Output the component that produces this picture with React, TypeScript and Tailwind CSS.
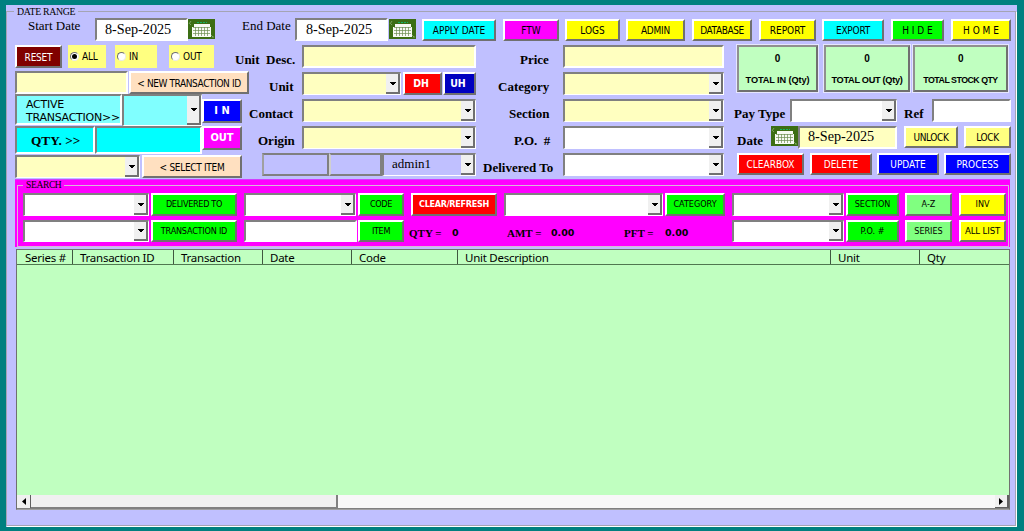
import type { ReactNode } from "react";
import clsx from "clsx";
import { twMerge } from "tailwind-merge";

const RAISED =
  "border-2 border-t-white border-l-white border-r-[#707070] border-b-[#707070]";
const SUNKEN =
  "border-2 border-t-[#808080] border-l-[#808080] border-r-white border-b-white";
const UI = "font-['DejaVu_Sans_Condensed','Noto_Sans',sans-serif]";
const SERIF = "font-['Liberation_Serif',serif]";

type BoxProps = { className?: string; children?: ReactNode };

function Button({ className, children }: BoxProps) {
  return (
    <button
      type="button"
      className={clsx(
        "flex shrink-0 items-center justify-center pt-px whitespace-pre",
        UI,
        RAISED,
        twMerge("text-[10px]", className),
      )}
    >
      {children}
    </button>
  );
}

function Field({ className, children }: BoxProps) {
  return (
    <div className={clsx("flex shrink-0 items-center whitespace-pre", SUNKEN, className)}>
      {children}
    </div>
  );
}

function Combo({ className, children }: BoxProps) {
  return (
    <div
      className={clsx(
        "flex shrink-0 justify-between border-2 border-r border-b border-t-[#808080] border-l-[#808080] border-r-white border-b-white",
        className,
      )}
    >
      <span className={clsx("pl-2 text-[13px] leading-[17px]", SERIF)}>{children}</span>
      <span className="flex w-[14px] shrink-0 items-center justify-center border-r-2 border-b-2 border-r-[#707070] border-b-[#707070] bg-[#f0f0f0]">
        <svg className="mt-px ml-px" width="7" height="4" viewBox="0 0 7 4" shapeRendering="crispEdges">
          <path d="M0 0h7L3.5 3.5z" fill="#000" />
        </svg>
      </span>
    </div>
  );
}

function Label({ className, children }: BoxProps) {
  return (
    <span
      className={clsx(
        "shrink-0 whitespace-pre pt-[7px] text-[13px] leading-4 font-bold",
        SERIF,
        className,
      )}
    >
      {children}
    </span>
  );
}

function DateIcon({ className }: { className?: string }) {
  return (
    <svg
      className={clsx("shrink-0", className)}
      width="27"
      height="20"
      viewBox="0 0 27 20"
    >
      <rect width="27" height="20" fill="#3c6e14" />
      <path d="M9 3.5h10" stroke="#14b464" strokeDasharray="2 1" />
      <path d="M6 5h16v3h1v10H4V8h2z" fill="#f8faf4" />
      <path
        d="M5 8.5h17M5 11.5h17M5 14.5h17M7.5 8v9M10.5 8v9M13.5 8v9M16.5 8v9M19.5 8v9"
        stroke="#6c8c50"
        strokeWidth="0.7"
      />
      <path d="M1 5l2-3M2 6l1-1M23 16l2 2M24 18h2" stroke="#8ab070" strokeWidth="0.8" />
    </svg>
  );
}

function Radio({ className, checked, children }: BoxProps & { checked?: boolean }) {
  return (
    <label
      className={clsx(
        "flex h-[23px] shrink-0 items-center gap-[3px] bg-[#ffff80] pl-0.5 text-[10px] leading-none tracking-[-0.2px]",
        UI,
        className,
      )}
    >
      <span className="flex size-[9px] items-center justify-center rounded-full border border-t-[#707070] border-r-[#e8e8e8] border-b-[#e8e8e8] border-l-[#707070] bg-white">
        {checked && <span className="size-[5px] rounded-full bg-black" />}
      </span>
      {children}
    </label>
  );
}

function Total({ className, title }: { className?: string; title: string }) {
  return (
    <div
      className={clsx(
        "flex h-[47px] shrink-0 flex-col items-center border-2 border-t-[#909090] border-r-[#707070] border-b-[#707070] border-l-[#909090] bg-[#c0ffc0] pt-[7px] font-['Liberation_Sans',sans-serif] font-bold whitespace-nowrap outline-1 outline-white/60",
        className,
      )}
    >
      <span className="text-[10px] leading-[10px]">0</span>
      <span className="mt-[10px] leading-[12px]">{title}</span>
    </div>
  );
}

const COLUMNS = [
  { name: "Series #", width: "w-[55px]" },
  { name: "Transaction ID", width: "w-[101px]" },
  { name: "Transaction", width: "w-[89px]" },
  { name: "Date", width: "w-[89px]" },
  { name: "Code", width: "w-[106px]" },
  { name: "Unit Description", width: "w-[373px]" },
  { name: "Unit", width: "w-[89px]" },
  { name: "Qty", width: "flex-1" },
];

function Toolbar() {
  return (
    <div className="flex h-[26px] pl-[21px]">
      <span className={clsx("-mt-px w-[67px] text-[13px] leading-4", SERIF)}>Start Date</span>
      <Field className={clsx("h-[23px] w-[93px] -mt-px bg-white pl-2 text-[14.2px]", SERIF)}>
        8-Sep-2025
      </Field>
      <DateIcon />
      <span className={clsx("-mt-px ml-[27px] w-[53px] text-[13px] leading-4", SERIF)}>
        End Date
      </span>
      <Field className={clsx("h-[23px] w-[93px] -mt-px bg-white pl-[9px] text-[14.2px]", SERIF)}>
        8-Sep-2025
      </Field>
      <DateIcon className="ml-px" />
      <Button className="ml-[6px] h-[22px] w-[74px] bg-[#00ffff]">APPLY DATE</Button>
      <Button className="ml-[7px] h-[22px] w-[56px] bg-[#ff00ff]">FTW</Button>
      <Button className="ml-[6px] h-[22px] w-[55px] bg-[#ffff00]">LOGS</Button>
      <Button className="ml-[6px] h-[22px] w-[59px] bg-[#ffff00] tracking-[-0.2px]">ADMIN</Button>
      <Button className="ml-[7px] h-[22px] w-[60px] bg-[#ffff00] tracking-[-0.4px]">DATABASE</Button>
      <Button className="ml-[7px] h-[22px] w-[57px] bg-[#ffff00]">REPORT</Button>
      <Button className="ml-[6px] h-[22px] w-[62px] bg-[#00ffff] tracking-[-0.2px]">EXPORT</Button>
      <Button className="ml-[7px] h-[22px] w-[53px] bg-[#00ff00]">H I D E</Button>
      <Button className="ml-[7px] h-[22px] w-[60px] bg-[#ffff00]">H O M E</Button>
    </div>
  );
}

function TransactionPanel() {
  return (
    <div className="w-[234px] shrink-0">
      <div className="flex h-[26px]">
        <Button className="h-[23px] w-[47px] bg-[#800000] tracking-[-0.2px] text-white">RESET</Button>
        <Radio checked className="ml-[6px] w-[38px]">ALL</Radio>
        <Radio className="ml-[9px] w-[42px]">IN</Radio>
        <Radio className="ml-[12px] w-[45px]">OUT</Radio>
      </div>
      <div className="flex h-[23px]">
        <Field className="h-[23px] w-[113px] bg-[#ffffc0]" />
        <Button className="ml-px h-[23px] w-[120px] bg-[#ffe0c0] tracking-[-0.4px]">
          {"< NEW TRANSACTION ID"}
        </Button>
      </div>
      <div className="flex h-[61px]">
        <div className="w-[187px]">
          <div className="flex h-[32px]">
            <Field className="h-[31px] w-[107px] bg-[#80ffff] pt-[2px] pl-[9px] font-['DejaVu_Sans',sans-serif] text-[11px] leading-[13px] tracking-[-0.25px]">
              {"ACTIVE\nTRANSACTION>>"}
            </Field>
            <Combo className="h-[32px] w-[80px] bg-[#80ffff]" />
          </div>
          <div className="flex">
            <Field
              className={clsx("h-[28px] w-[80px] bg-[#00ffff] pt-[2px] pl-[14px] text-[13.3px] font-bold", SERIF)}
            >
              {"QTY. >>"}
            </Field>
            <Field className="h-[28px] w-[107px] bg-[#00ffff]" />
          </div>
        </div>
        <div className="flex flex-col gap-[3px] pt-[5px]">
          <Button className="h-[24px] w-[40px] bg-[#0000ff] text-[11px] font-bold text-white">
            I N
          </Button>
          <Button className="h-[24px] w-[40px] bg-[#ff00ff] text-[11px] font-bold text-white">
            OUT
          </Button>
        </div>
      </div>
      <div className="flex">
        <Combo className="h-[23px] w-[125px] bg-[#ffffc0]" />
        <Button className="ml-[2px] h-[23px] w-[100px] bg-[#ffe0c0] tracking-[-0.3px]">
          {"< SELECT ITEM"}
        </Button>
      </div>
    </div>
  );
}

function UnitPanel() {
  return (
    <div className="-ml-[14px] flex w-[241px] shrink-0 flex-col gap-[4px]">
      <div className="flex h-[23px]">
        <Label className="w-[67px]">Unit  Desc.</Label>
        <Field className="h-[23px] w-[174px] bg-[#ffffc0]" />
      </div>
      <div className="flex h-[23px]">
        <Label className="w-[67px] pl-[34px]">Unit</Label>
        <Combo className="h-[23px] w-[99px] bg-[#ffffc0]" />
        <Button className="ml-[2px] h-[23px] w-[39px] bg-[#ff0000] pr-[3px] text-[10.5px] font-bold text-white">
          DH
        </Button>
        <Button className="ml-px h-[23px] w-[33px] bg-[#0000c0] pr-[3px] text-[10.5px] font-bold text-white">
          UH
        </Button>
      </div>
      <div className="flex h-[23px]">
        <Label className="w-[67px] pl-[14px]">Contact</Label>
        <Combo className="h-[23px] w-[174px] bg-[#ffffc0]" />
      </div>
      <div className="flex h-[23px]">
        <Label className="w-[67px] pl-[23px]">Origin</Label>
        <Combo className="h-[23px] w-[174px] bg-[#ffffc0]" />
      </div>
      <div className="flex h-[23px] pl-[27px]">
        <div className="h-[23px] w-[67px] border-2 border-[#808080] border-l-[#a0a0a0]" />
        <div className="h-[23px] w-[53px] border-2 border-[#808080] border-l-[#d0d0d0]" />
        <Combo className="h-[23px] w-[94px]">admin1</Combo>
      </div>
    </div>
  );
}

function CategoryPanel() {
  return (
    <div className="ml-[7px] flex w-[241px] shrink-0 flex-col gap-[4px]">
      <div className="flex h-[23px]">
        <Label className="w-[80px] pl-[37px]">Price</Label>
        <Field className="h-[23px] w-[161px] bg-[#ffffc0]" />
      </div>
      <div className="flex h-[23px]">
        <Label className="w-[80px] pl-[15px]">Category</Label>
        <Combo className="h-[23px] w-[161px] bg-[#ffffc0]" />
      </div>
      <div className="flex h-[23px]">
        <Label className="w-[80px] pl-[26px]">Section</Label>
        <Combo className="h-[23px] w-[161px] bg-[#ffffc0]" />
      </div>
      <div className="flex h-[23px]">
        <Label className="w-[80px] pl-[31px]">P.O.  #</Label>
        <Combo className="h-[23px] w-[161px] bg-white" />
      </div>
      <div className="flex h-[23px]">
        <Label className="w-[80px]">Delivered To</Label>
        <Combo className="h-[23px] w-[161px] bg-white" />
      </div>
    </div>
  );
}

function SummaryPanel() {
  return (
    <div className="ml-[10px] flex w-[277px] shrink-0 flex-col">
      <div className="flex h-[54px] pl-[3px]">
        <Total className="w-[81px] text-[9.2px] tracking-[-0.1px]" title="TOTAL IN (Qty)" />
        <Total className="ml-[6px] w-[86px] text-[9.2px] tracking-[-0.3px]" title="TOTAL OUT (Qty)" />
        <Total className="ml-[3px] w-[95px] text-[8.8px] tracking-[-0.5px]" title="TOTAL STOCK QTY" />
      </div>
      <div className="flex h-[27px]">
        <Label className="w-[56px]">Pay Type</Label>
        <Combo className="h-[23px] w-[107px] bg-white" />
        <Label className="w-[35px] pl-[7px]">Ref</Label>
        <Field className="h-[23px] w-[79px] bg-white" />
      </div>
      <div className="flex h-[27px]">
        <Label className="w-[37px] pl-[3px]">Date</Label>
        <DateIcon />
        <Field className={clsx("h-[23px] w-[99px] bg-[#ffffc0] pl-2 pb-[2px] text-[14.2px]", SERIF)}>
          8-Sep-2025
        </Field>
        <Button className="ml-[7px] h-[22px] w-[54px] bg-[#ffff80] tracking-[-0.4px]">UNLOCK</Button>
        <Button className="ml-[6px] h-[22px] w-[47px] bg-[#ffff80] tracking-[-0.3px]">LOCK</Button>
      </div>
      <div className="flex pl-[3px]">
        <Button className="h-[22px] w-[67px] bg-[#ff0000] text-white">CLEARBOX</Button>
        <Button className="ml-[6px] h-[22px] w-[62px] bg-[#ff0000] text-white">DELETE</Button>
        <Button className="ml-[5px] h-[22px] w-[62px] bg-[#0000ff] text-white">UPDATE</Button>
        <Button className="ml-[5px] h-[22px] w-[67px] bg-[#0000ff] text-white">PROCESS</Button>
      </div>
    </div>
  );
}

type AmountProps = { label: string; value: string; className?: string; labelWidth: string };

function Amount({ label, value, className, labelWidth }: AmountProps) {
  return (
    <span className={clsx("flex shrink-0 items-center pt-[4px] text-[11px] font-bold", className)}>
      <span className={clsx(labelWidth, SERIF)}>{label}</span>
      <span className="font-['DejaVu_Sans',sans-serif] text-[9.5px]">{value}</span>
    </span>
  );
}

function SearchPanel() {
  return (
    <section className="h-[68px] w-[995px] border-t border-[#d040ff] bg-[#ff00ff] pl-[2px]">
      <fieldset className="h-[67px] w-[992px] border border-[#d8b8d8]">
        <legend
          className={clsx(
            "ml-[5px] h-[11px] bg-[#ff00ff] px-[3px] text-[9.5px] leading-[11px] tracking-[-0.35px]",
            SERIF,
          )}
        >
          SEARCH
        </legend>
        <div className="flex pt-[2px] pl-[5px]">
          <Combo className="h-[23px] w-[126px] bg-white" />
          <Button className="ml-[2px] h-[23px] w-[86px] bg-[#00ff00] text-[9px] tracking-[-0.3px]">
            DELIVERED TO
          </Button>
          <Combo className="ml-[7px] h-[23px] w-[112px] bg-white" />
          <Button className="ml-[2px] h-[23px] w-[46px] bg-[#00ff00] text-[9px] tracking-[-0.4px]">
            CODE
          </Button>
          <Button className="ml-[7px] h-[23px] w-[86px] bg-[#ff0000] text-[9px] font-bold tracking-[-0.3px] text-white">
            CLEAR/REFRESH
          </Button>
          <Combo className="ml-[7px] h-[23px] w-[159px] bg-white" />
          <Button className="ml-[2px] h-[23px] w-[60px] bg-[#00ff00] text-[9px]">CATEGORY</Button>
          <Combo className="ml-[7px] h-[23px] w-[112px] bg-white" />
          <Button className="ml-[2px] h-[23px] w-[53px] bg-[#00ff00] text-[9px]">SECTION</Button>
          <Button className="ml-[6px] h-[23px] w-[47px] bg-[#80ff80] text-[9px]">A-Z</Button>
          <Button className="ml-[7px] h-[23px] w-[47px] bg-[#ffff00] text-[9px]">INV</Button>
        </div>
        <div className="flex pt-[4px] pl-[5px]">
          <Combo className="h-[22px] w-[126px] bg-white" />
          <Button className="ml-[2px] h-[22px] w-[86px] bg-[#00ff00] text-[9px] tracking-[-0.2px]">
            TRANSACTION ID
          </Button>
          <Field className="ml-[7px] h-[22px] w-[113px] bg-white" />
          <Button className="ml-px h-[22px] w-[46px] bg-[#00ff00] text-[9px] tracking-[-0.3px]">
            ITEM
          </Button>
          <Amount className="ml-[5px] w-[98px]" labelWidth="w-[43px]" label="QTY =" value="0" />
          <Amount className="w-[117px]" labelWidth="w-[44px]" label="AMT =" value="0.00" />
          <Amount className="w-[108px]" labelWidth="w-[41px]" label="PFT =" value="0.00" />
          <Combo className="h-[22px] w-[112px] bg-white" />
          <Button className="ml-[2px] h-[22px] w-[53px] bg-[#00ff00] text-[9px]">P.O. #</Button>
          <Button className="ml-[6px] h-[22px] w-[47px] bg-[#80ff80] text-[9px]">SERIES</Button>
          <Button className="ml-[7px] h-[22px] w-[47px] bg-[#ffff00] text-[9.5px] tracking-[-0.1px]">
            ALL LIST
          </Button>
        </div>
      </fieldset>
    </section>
  );
}

function TransactionTable() {
  return (
    <section className="mt-[2px] ml-px flex h-[261px] w-[994px] flex-col border border-t-[#707070] border-r-[#707070] border-b-[#a0a0a0] border-l-[#707070] bg-[#c0ffc0]">
      <div className="flex h-[15px] shrink-0 border-b border-[#507850] font-['Noto_Sans',sans-serif] text-[11.5px] leading-[15px] tracking-[-0.25px]">
        {COLUMNS.map((column, i) => (
          <span
            key={column.name}
            className={clsx(
              "shrink-0 whitespace-nowrap",
              column.width,
              i > 0 ? "border-l border-[#405840] pl-[7px]" : "pl-[8px]",
            )}
          >
            {column.name}
          </span>
        ))}
      </div>
      <div className="flex-1" />
      <div className="flex h-[14px] shrink-0 border-b border-[#808080] bg-[#f8f8f8]">
        <span className="flex w-[14px] items-center justify-center border-r border-[#606060] bg-[#f0f0f0]">
          <svg width="4" height="7" viewBox="0 0 4 7">
            <path d="M4 0v7L0 3.5z" />
          </svg>
        </span>
        <span className="w-[307px] border-r-2 border-b border-[#808080] bg-[#f0f0f0]" />
        <span className="ml-auto flex w-[14px] items-center justify-center border-r-2 border-b border-[#606060] bg-[#f0f0f0]">
          <svg width="4" height="7" viewBox="0 0 4 7">
            <path d="M0 0v7l4-3.5z" />
          </svg>
        </span>
      </div>
    </section>
  );
}

export default function App() {
  return (
    <main className="h-[531px] w-[1024px] overflow-hidden bg-[#008080] pt-[5px] pl-[6px] text-black">
      <div className="h-[522px] w-[1011px] bg-[#c0c0ff]">
        <fieldset className="h-[521px] w-[1010px] border border-[#a4a4b4] shadow-[1px_1px_0_#fff]">
          <legend
            className={clsx(
              "ml-[7px] h-[13px] bg-[#c0c0ff] px-[3px] text-[9.8px] leading-[13px] tracking-[-0.3px]",
              SERIF,
            )}
          >
            DATE RANGE
          </legend>
          <div className="-mt-px pt-[2px]">
            <Toolbar />
            <div className="flex h-[134px] pl-[8px]">
              <TransactionPanel />
              <UnitPanel />
              <CategoryPanel />
              <SummaryPanel />
            </div>
            <div className="pl-[8px]">
              <SearchPanel />
              <TransactionTable />
            </div>
          </div>
        </fieldset>
      </div>
    </main>
  );
}
